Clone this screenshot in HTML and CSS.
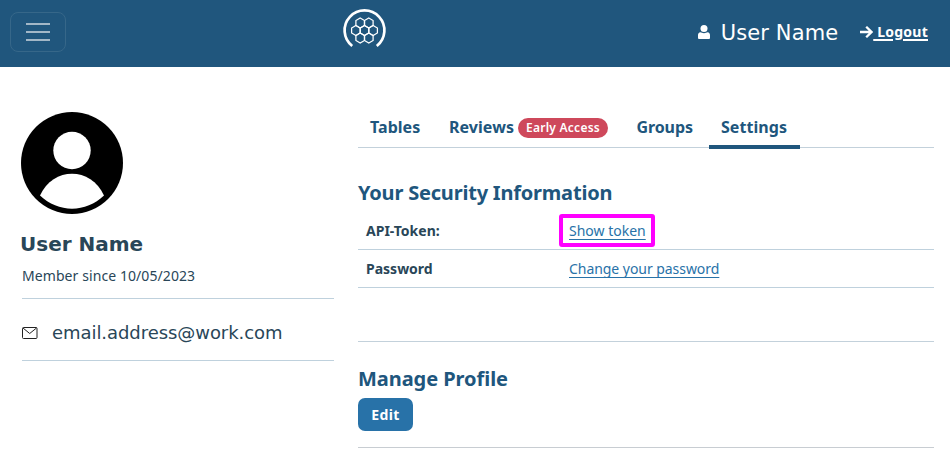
FILE: index.html
```html
<!DOCTYPE html>
<html lang="en">
<head>
<meta charset="utf-8">
<title>Profile settings</title>
<link rel="stylesheet" href="styles.css">
</head>
<body>
<header class="topbar">
  <button class="menu" aria-label="Menu"><span></span><span></span><span></span></button>
  <svg class="logo" width="46" height="42" viewBox="0 0 46 42" fill="none" stroke="#fff">
    <path d="M11.200 37A19.900 19.900 0 1 1 35.800 37" stroke-width="2.700"/>
    <g stroke-width="1.250">
      <path id="hex" d="M23.500 16.500l4.300 2.500v5l-4.300 2.500-4.300-2.500v-5z"/>
      <use href="#hex" x="-8.600"/><use href="#hex" x="8.600"/>
      <use href="#hex" x="-4.300" y="-7.500"/><use href="#hex" x="4.300" y="-7.500"/>
      <use href="#hex" x="-4.300" y="7.500"/><use href="#hex" x="4.300" y="7.500"/>
    </g>
  </svg>
  <div class="account">
    <svg class="person" width="12" height="14" viewBox="0 0 12 14" fill="#fff"><circle cx="6" cy="3.500" r="3.500"/><path d="M2.500 7.300C4 8.400 8 8.400 9.500 7.300 11.200 7.500 12 8.700 12 10.200V13q0 1-1 1H1q-1 0-1-1v-2.800C0 8.700 .8 7.500 2.500 7.300z"/></svg>
    <span class="account-name">User Name</span>
    <svg class="arrow" width="13" height="12" viewBox="0 0 13 12" fill="none" stroke="#fff" stroke-width="2.300"><path d="M0 6h11.500M6.200 .8 11.500 6l-5.300 5.200"/></svg>
    <a class="logout" href="#">&nbsp;Logout</a>
  </div>
</header>
<main class="page">
  <aside class="profile">
    <svg class="avatar" width="102" height="102" viewBox="0 0 102 102"><circle cx="51" cy="51" r="51"/><g fill="#fff"><circle cx="51" cy="38.500" r="18.700"/><path d="M19 83.500C32 54.500 70 54.500 83 83.500 65 101 37 101 19 83.500z"/></g></svg>
    <h1>User Name</h1>
    <p class="member">Member since 10/05/2023</p>
    <div class="email">
      <svg width="16" height="12" viewBox="0 0 16 12" fill="none" stroke="#222"><rect x=".5" y=".5" width="14.500" height="11" rx="1"/><path d="M1 1l6.700 5.500L14.500 1"/></svg>
      <span>email.address@work.com</span>
    </div>
  </aside>
  <section class="content">
    <nav class="tabs">
      <a class="tab tables"><span>Tables</span></a>
      <a class="tab reviews"><span>Reviews</span><b class="badge">Early Access</b></a>
      <a class="tab groups"><span>Groups</span></a>
      <a class="tab active"><span>Settings</span></a>
    </nav>
    <h2>Your Security Information</h2>
    <dl class="rows">
      <div class="row"><dt class="api">API-Token:</dt><dd><a class="token" href="#">Show token</a></dd></div>
      <div class="row"><dt class="pass">Password</dt><dd><a class="change" href="#">Change your password</a></dd></div>
    </dl>
    <div class="manage">
      <h2 class="manage-title">Manage Profile</h2>
      <button class="edit">Edit</button>
    </div>
  </section>
</main>
</body>
</html>
```
FILE: styles.css
```css
* { box-sizing: border-box; }
body { margin: 0; background: #fff; color: #294658; font: 14px/20px "Noto Sans", sans-serif; }
h1, h2, p, dl, dt, dd { margin: 0; }
.topbar { height: 67px; background: #20567d; display: grid; grid-template-columns: 341px 46px 1fr; align-items: start; color: #fff; }
.menu { width: 56px; height: 40px; margin: 12px 0 0 10px; padding: 0 15px; border: 1px solid #366789; border-radius: 8px; background: none; display: flex; flex-direction: column; justify-content: center; gap: 6px; }
.menu span { height: 2px; background: #a2b7c7; }
.logo { margin-top: 9px; }
.account { display: flex; align-items: center; justify-content: flex-end; height: 64px; padding-right: 22px; }
.account-name { font: 21px/24px "DejaVu Sans", sans-serif; letter-spacing: .12px; margin: 2px 22px 0 11px; }
.logout { color: #fff; font-weight: 700; font-size: 14px; letter-spacing: .25px; text-underline-offset: 2px; text-decoration-thickness: 2px; text-decoration-skip-ink: auto; }
.page { display: grid; grid-template-columns: 312px 576px; column-gap: 24px; padding-left: 22px; }
.profile { padding-top: 45px; }
.avatar { display: block; margin-left: -1px; }
h1 { font: 700 20px/24px "DejaVu Sans", sans-serif; margin: 18px 0 0 -2px; }
.member { margin-top: 10px; height: 33px; letter-spacing: .08px; border-bottom: 1px solid #bfd1dd; }
.email { display: flex; align-items: center; gap: 14px; height: 62px; padding-top: 6px; border-bottom: 1px solid #bfd1dd; font: 18px/24px "DejaVu Sans", sans-serif; letter-spacing: -.06px; }
.content { padding-top: 43px; }
.tabs { display: flex; height: 38px; border-bottom: 1px solid #c3d1db; }
.tab { height: 39px; padding: 6px 12px 0; display: flex; align-items: flex-start; font-weight: 700; font-size: 16px; letter-spacing: .05px; line-height: 22px; color: #20567d; white-space: nowrap; }
.tables { width: 79px; }
.reviews { width: 187.500px; }
.reviews > span { width: 65px; }
.groups { width: 84.500px; letter-spacing: -.1px; }
.active { width: 91px; border-bottom: 4px solid #20567d; }
.badge { margin: 2px 0 0 4px; width: 90px; height: 20px; border-radius: 10px; background: #ce485b; color: #fff; font-size: 12px; font-weight: 600; letter-spacing: .25px; line-height: 20px; text-align: center; }
h2 { font-size: 20px; font-weight: 700; letter-spacing: -.2px; line-height: 26px; color: #20567d; white-space: nowrap; }
.manage-title { letter-spacing: -.05px; }
.tabs + h2 { margin-top: 32px; }
.rows { margin-top: 6px; height: 130px; border-bottom: 1px solid #c3d1db; }
.row { height: 38px; display: grid; grid-template-columns: 203px 1fr; padding: 9px 8px; border-bottom: 1px solid #bfd1dd; }
dt { font-weight: 700; }
dd a { color: #2872a8; text-underline-offset: 3px; text-decoration-skip-ink: auto; position: relative; }
.change { letter-spacing: -.05px; }
.token::after { content: ""; position: absolute; inset: -7px -9px -7px -10px; border: 4px solid #f0f; border-radius: 3px; }
.manage { padding-top: 24px; height: 106px; border-bottom: 1px solid #c8cdd2; }
.edit { display: block; margin-top: 6px; width: 55px; height: 33px; padding: 0; border: 0; border-radius: 7px; background: #2872a8; color: #fff; font: 700 14px/33px "Noto Sans", sans-serif; letter-spacing: .4px; }
```
